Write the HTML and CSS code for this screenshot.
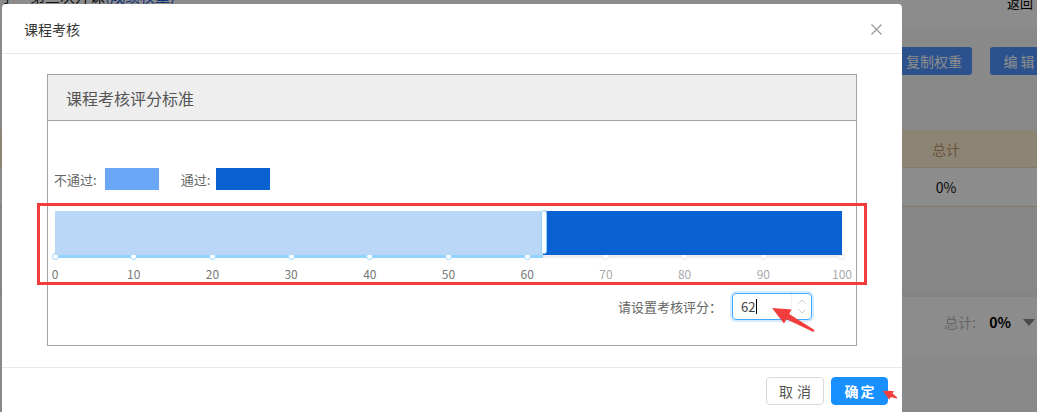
FILE: index.html
```html
<!DOCTYPE html>
<html lang="zh-CN">
<head>
  <meta charset="UTF-8" />
  <title>课程考核</title>
  <link rel="stylesheet" href="styles.css">
</head>
<body>
  <!-- 背景页面 -->
  <div class="page">
    <div class="topbar">
      <span class="crumb">学 &gt; 第三次开课<em>(成绩权重)</em></span>
      <span class="back">返回</span>
    </div>
    <div class="toolbar">
      <button class="btn-dark">复制权重</button>
      <button class="btn-dark">编 辑</button>
    </div>
    <div class="weights">
      <div class="w-head"><span></span><span class="w-cell">总计</span><span></span></div>
      <div class="w-row"><span></span><span class="w-cell">0%</span><span></span></div>
    </div>
    <div class="gap-band"></div>
    <div class="summary">
      <span class="sum-label">总计:</span>
      <b class="sum-val">0%</b>
      <span class="sum-caret"></span>
    </div>
  </div>

  <div class="mask"></div>

  <!-- 弹窗 -->
  <div class="modal">
    <div class="modal-head">
      <span class="modal-title">课程考核</span>
      <svg class="modal-close" width="11" height="11" viewBox="0 0 11 11">
        <path d="M0.5 0.5 L10.5 10.5 M10.5 0.5 L0.5 10.5" stroke="#999" stroke-width="1.2" fill="none"/>
      </svg>
    </div>

    <div class="modal-body">
      <div class="panel">
        <div class="panel-head">课程考核评分标准</div>
        <div class="panel-body">
          <div class="legend">
            <span>不通过:</span><i class="swatch swatch-fail"></i>
            <span class="legend-pass">通过:</span><i class="swatch swatch-pass"></i>
          </div>

          <div class="slider" style="--val:62%">
            <div class="slider-bar">
              <div class="bar-fail"></div>
              <div class="bar-pass"></div>
              <div class="slider-handle"></div>
            </div>
            <div class="slider-track"><div class="track-fill"></div></div>
            <div class="slider-dots">
              <i class="dot on"></i><i class="dot on"></i><i class="dot on"></i><i class="dot on"></i>
              <i class="dot on"></i><i class="dot on"></i><i class="dot on"></i><i class="dot"></i>
              <i class="dot"></i><i class="dot"></i><i class="dot"></i>
            </div>
            <div class="slider-marks">
              <span class="on">0</span><span class="on">10</span><span class="on">20</span><span class="on">30</span>
              <span class="on">40</span><span class="on">50</span><span class="on">60</span><span>70</span>
              <span>80</span><span>90</span><span>100</span>
            </div>
          </div>

          <div class="score-row">
            <label class="score-label">请设置考核评分：</label>
            <div class="num-input">
              <span class="num-value">62<i class="caret"></i></span>
              <span class="num-handler">
                <svg width="8" height="5" viewBox="0 0 8 5"><path d="M0.5 4.5 L4 1 L7.5 4.5" stroke="#ccc" fill="none"/></svg>
                <svg width="8" height="5" viewBox="0 0 8 5"><path d="M0.5 0.5 L4 4 L7.5 0.5" stroke="#ccc" fill="none"/></svg>
              </span>
            </div>
          </div>
        </div>
      </div>
    </div>

    <div class="modal-foot">
      <button class="btn btn-cancel">取消</button>
      <button class="btn btn-ok">确定</button>
    </div>
  </div>

  <!-- 标注 -->
  <div class="mark-box"></div>
  <svg class="mark-arrow" width="1037" height="412" viewBox="0 0 1037 412">
    <polygon fill="#f23d3d" points="772,308 791.6,309.6 789.2,314 814.5,330.1 813.5,331.9 786.4,319.2 784,323.6"/>
    <polygon fill="#f23d3d" points="882.7,390.7 893.9,390.9 892.5,393.5 897.3,397.4 896.7,398.6 890.7,397.1 889.3,399.7"/>
  </svg>
</body>
</html>
```

FILE: styles.css
```css
:root {
  --blue: #1890ff;
  --bar-fail: #bad7f8;
  --bar-pass: #0a62d2;
  --line: #e8e8e8;
  --mark: #f23d3d;
}
* { box-sizing: border-box; }
body {
  margin: 0;
  width: 1037px;
  height: 412px;
  overflow: hidden;
  font-family: "Noto Sans CJK SC", "Liberation Sans", sans-serif;
  background: #f9f9f9;
  color: #333;
}

/* ===== 背景页面 ===== */
.page { width: 1037px; }
.topbar { height: 28px; background: #fff; display: flex; justify-content: space-between; align-items: flex-start; }
.crumb { font-size: 15px; line-height: 20px; margin: -14px 0 0 0; color: #222; }
.crumb em { font-style: normal; color: #1f5fd6; }
.back { font-size: 13px; line-height: 18px; margin: -6px 4px 0 0; color: #000; }
.toolbar { display: flex; justify-content: flex-end; gap: 18px; padding-top: 19px; margin-right: -11px; height: 102px; }
.btn-dark { height: 28px; width: 76px; border: none; border-radius: 3px; background: #4f95ff; color: #fff; font: inherit; font-size: 14px; padding: 0; }
.btn-dark + .btn-dark { width: 58px; }
.weights { background: #fff; }
.w-head, .w-row { display: grid; grid-template-columns: 1fr 90px 46px; align-items: center; }
.w-head { height: 38px; background: #fff1d6; color: #c49a66; font-size: 14px; border-bottom: 1px solid #f3dfbb; }
.w-row { height: 39px; font-size: 14px; color: #111; border-bottom: 1px solid #f3dfbb; }
.w-cell { text-align: center; }
.gap-band { height: 90px; background: #f6f6f6; border-bottom: 7px solid #f0f0f0; }
.summary { height: 60px; background: #fff; display: flex; align-items: center; justify-content: flex-end; padding: 0 2px 10px 0; font-size: 14px; }
.sum-label { color: #bbb; margin-right: 13px; }
.sum-val { color: #000; margin-right: 12px; }
.sum-caret { width: 0; height: 0; border-left: 6px solid transparent; border-right: 6px solid transparent; border-top: 7px solid #888; }

.mask { position: fixed; inset: 0; background: rgba(0, 0, 0, 0.45); }

/* ===== 弹窗 ===== */
.modal { position: fixed; left: 2px; top: 4px; width: 900px; background: #fff; border-radius: 4px; }
.modal-head { height: 50px; padding: 0 20px 0 22px; display: flex; align-items: center; justify-content: space-between; border-bottom: 1px solid var(--line); }
.modal-title { font-size: 14px; color: #333; }
.modal-close { margin-top: 2px; }
.modal-body { padding: 20px 45px 21px; }

.panel { border: 1px solid #a3a3a3; }
.panel-head { height: 46px; background: #eee; border-bottom: 1px solid #a3a3a3; padding-left: 18px; display: flex; align-items: center; font-size: 16px; color: #555; }
.panel-body { height: 224px; padding-top: 47px; }

.legend { display: flex; align-items: center; padding-left: 6px; font-size: 13px; color: #666; height: 22px; }
.swatch { display: block; width: 54px; height: 22px; margin-left: 8px; }
.swatch-fail { background: #6aa8f7; }
.swatch-pass { background: var(--bar-pass); margin-left: 6px; }
.legend-pass { margin-left: 22px; }

/* ===== 滑块 ===== */
.slider { width: 787px; margin: 21px 0 0 7px; }
.slider-bar { position: relative; height: 44px; display: flex; }
.bar-fail { width: var(--val); background: var(--bar-fail); }
.bar-pass { flex: 1; background: var(--bar-pass); }
.slider-handle { position: absolute; top: -1px; left: calc(var(--val) - 2px); width: 6px; height: 44px; background: #fff; border: 1px solid #91d5ff; border-radius: 3px; }
.slider-track { height: 3px; background: #eee; }
.track-fill { width: var(--val); height: 3px; background: #91d5ff; }
.slider-dots, .slider-marks { display: grid; grid-template-columns: repeat(11, 1fr); width: 865.7px; margin-left: -39.35px; justify-items: center; }
.slider-dots { margin-top: -5px; height: 7px; }
.dot { display: block; width: 7px; height: 7px; border-radius: 50%; background: #fff; border: 1px solid #e8e8e8; }
.dot.on { border-color: #91d5ff; }
.slider-marks { margin-top: 6px; font-size: 12px; line-height: 16px; color: #aaa; }
.slider-marks .on { color: #777; }

/* ===== 评分输入 ===== */
.score-row { display: flex; justify-content: flex-end; align-items: center; gap: 10px; margin-top: 11px; padding-right: 44px; }
.score-label { font-size: 13px; color: #666; }
.num-input { width: 80px; height: 27px; display: flex; border: 1px solid #40a9ff; border-radius: 4px; box-shadow: 0 0 0 2px rgba(24, 144, 255, 0.18); }
.num-value { flex: 1; padding-left: 8px; font-size: 13px; line-height: 25px; color: #444; display: flex; align-items: center; }
.caret { display: block; width: 1px; height: 15px; background: #000; margin-left: 1px; }
.num-handler { width: 20px; border-left: 1px solid #f0f0f0; display: flex; flex-direction: column; align-items: center; justify-content: space-around; padding: 3px 0; }

/* ===== 底部 ===== */
.modal-foot { border-top: 1px solid var(--line); padding: 9px 14px 12px; display: flex; justify-content: flex-end; gap: 7px; }
.btn { height: 28px; border-radius: 4px; font: inherit; font-size: 14px; padding: 0; cursor: pointer; }
.btn-cancel { width: 58px; background: #fff; border: 1px solid #d9d9d9; color: #555; letter-spacing: 4px; text-indent: 4px; }
.btn-ok { width: 57px; background: var(--blue); border: 1px solid var(--blue); color: #fff; font-weight: 700; letter-spacing: 2px; text-indent: 2px; }

/* ===== 标注 ===== */
.mark-box { position: fixed; left: 37px; top: 203px; width: 830px; height: 82px; border: 3px solid var(--mark); }
.mark-arrow { position: fixed; left: 0; top: 0; }
```
